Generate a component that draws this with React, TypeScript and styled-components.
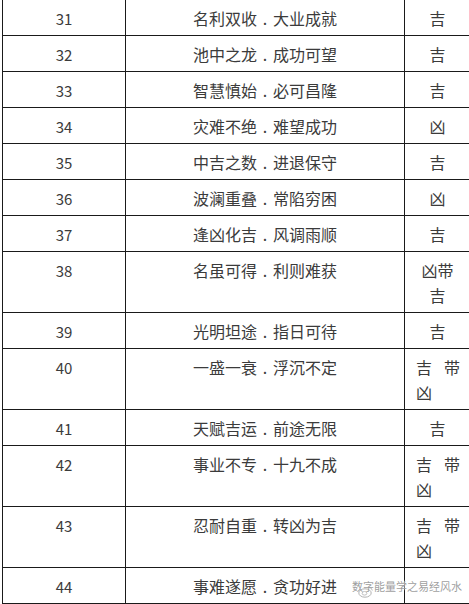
import React from 'react'
import styled, { createGlobalStyle } from 'styled-components'

interface IRow {
    num: number;
    text: string;
    result: React.ReactNode;
    tall?: boolean;
    justify?: boolean;
}

const GlobalStyle = createGlobalStyle`
    html, body {
        margin: 0;
        padding: 0;
        background: #ffffff;
        overflow: hidden;
    }
    body {
        font-family: "Noto Sans CJK SC", "Noto Sans", sans-serif;
        color: #3b3b3b;
    }
`

const SPage = styled.div`
    position: relative;
    width: 469px;
    height: 604px;
    overflow: hidden;
`

const STable = styled.div`
    margin-left: 2px;
    width: 470px;
    border-left: 1px solid #1a1a1a;
`

const SRow = styled.div<{ $tall?: boolean }>`
    display: grid;
    grid-template-columns: 123px 279px 66px;
    height: ${(props) => (props.$tall ? '61px' : '36px')};
    border-bottom: 1px solid #1a1a1a;
    box-sizing: border-box;
`

const SCell = styled.div`
    box-sizing: border-box;
    border-right: 1px solid #1a1a1a;
    padding-top: 6px;
    line-height: 25px;
    font-size: 16px;
    text-align: center;
    white-space: nowrap;
`

const SNumCell = styled(SCell)`
    font-size: 15px;
`

const SDot = styled.span`
    display: inline-block;
    width: 16px;
    text-align: center;
`

const SResultCell = styled(SCell)<{ $justify?: boolean }>`
    white-space: normal;
    text-align: ${(props) => (props.$justify ? 'justify' : 'center')};
    padding-left: ${(props) => (props.$justify ? '11px' : '0')};
    padding-right: ${(props) => (props.$justify ? '10px' : '0')};
`

const SWatermark = styled.div`
    position: absolute;
    left: 352px;
    top: 578px;
    font-size: 11px;
    line-height: 16px;
    color: rgba(140, 140, 140, 0.85);
    text-shadow: 0 0 2px #fff, 0 0 2px #fff;
    white-space: nowrap;
`

const SLogo = styled.svg`
    position: absolute;
    left: 6px;
    top: 7px;
    opacity: 0.75;
`

const rows: IRow[] = [
    { num: 31, text: '名利双收．大业成就', result: '吉' },
    { num: 32, text: '池中之龙．成功可望', result: '吉' },
    { num: 33, text: '智慧慎始．必可昌隆', result: '吉' },
    { num: 34, text: '灾难不绝．难望成功', result: '凶' },
    { num: 35, text: '中吉之数．进退保守', result: '吉' },
    { num: 36, text: '波澜重叠．常陷穷困', result: '凶' },
    { num: 37, text: '逢凶化吉．风调雨顺', result: '吉' },
    { num: 38, text: '名虽可得．利则难获', result: <>凶带<br />吉</>, tall: true },
    { num: 39, text: '光明坦途．指日可待', result: '吉' },
    { num: 40, text: '一盛一衰．浮沉不定', result: '吉带凶', tall: true, justify: true },
    { num: 41, text: '天赋吉运．前途无限', result: '吉' },
    { num: 42, text: '事业不专．十九不成', result: '吉带凶', tall: true, justify: true },
    { num: 43, text: '忍耐自重．转凶为吉', result: '吉带凶', tall: true, justify: true },
    { num: 44, text: '事难遂愿．贪功好进', result: '' },
]

const Phrase: React.FC<{ text: string }> = ({ text }) => {
    const [first, second] = text.split('．')
    return (
        <>
            {first}
            <SDot>.</SDot>
            {second}
        </>
    )
}

const App: React.FC = () => {
    return (
        <SPage>
            <GlobalStyle />
            <STable>
                {rows.map((row) => (
                    <SRow key={row.num} $tall={row.tall}>
                        <SNumCell>{row.num}</SNumCell>
                        <SCell><Phrase text={row.text} /></SCell>
                        <SResultCell $justify={row.justify}>{row.result}</SResultCell>
                    </SRow>
                ))}
            </STable>
            <SWatermark>
                <SLogo width="16" height="13" viewBox="0 0 16 13">
                    <ellipse cx="7" cy="8" rx="6.2" ry="4.2" fill="none" stroke="#999" strokeWidth="1" />
                    <ellipse cx="6.5" cy="8.3" rx="2.4" ry="1.8" fill="none" stroke="#999" strokeWidth="0.8" />
                    <path d="M11 2.5 Q14 2.5 14.3 5.5" fill="none" stroke="#999" strokeWidth="0.9" />
                </SLogo>
                数字能量学之易经风水
            </SWatermark>
        </SPage>
    )
}

export default App
